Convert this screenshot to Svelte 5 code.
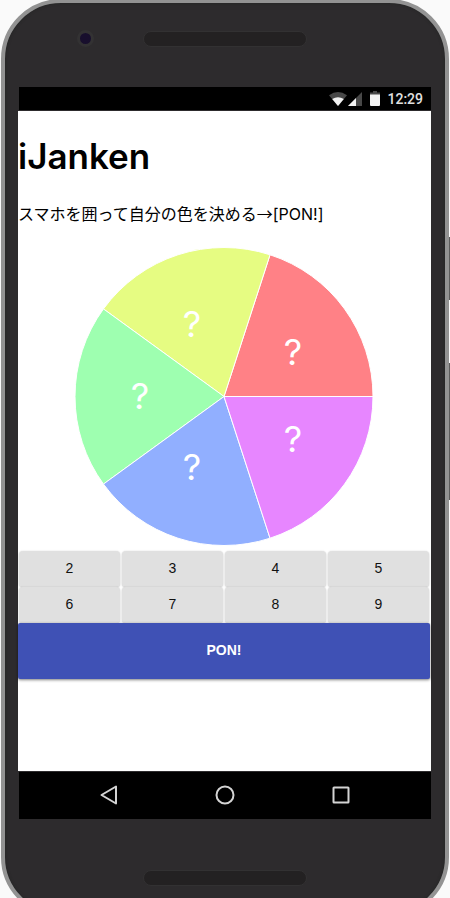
<script>
  const radius = 149;
  const centerX = 150;
  const centerY = 150.5;
  const slices = [
    { color: '#ff8186', x: 219, y: 119 },
    { color: '#e6fc82', x: 118, y: 91 },
    { color: '#9effb0', x: 66, y: 163 },
    { color: '#91afff', x: 118, y: 234 },
    { color: '#e786ff', x: 219, y: 206 }
  ];
  const numbers = [2, 3, 4, 5, 6, 7, 8, 9];

  function point(step) {
    const angle = (-step * 2 * Math.PI) / slices.length;
    return `${centerX + radius * Math.cos(angle)} ${centerY + radius * Math.sin(angle)}`;
  }

  function slicePath(i) {
    return `M${centerX} ${centerY}L${point(i)}A${radius} ${radius} 0 0 0 ${point(i + 1)}Z`;
  }
</script>

<div class="stage">
  <div class="phone">
    <span class="key power"></span>
    <span class="key volume"></span>

    <div class="bezel top">
      <span class="camera"></span>
      <span class="speaker"></span>
    </div>

    <div class="status">
      <svg class="wifi" width="18" height="14" viewBox="0 0 18 14" aria-hidden="true">
        <path d="M0 3.2Q9-3.2 18 3.2L9 14Z" fill="#484848" />
        <path d="M3.2 7Q9 3.6 14.8 7L9 14Z" fill="#f2f2f2" />
      </svg>
      <svg class="signal" width="14" height="14" viewBox="0 0 14 14" aria-hidden="true">
        <path d="M14 0V14H0Z" fill="#484848" />
        <path d="M8 6V14H0Z" fill="#f2f2f2" />
      </svg>
      <svg class="battery" width="10" height="15" viewBox="0 0 10 15" aria-hidden="true">
        <path d="M3 0H7V1.5H10V4H0V1.5H3Z" fill="#484848" />
        <path d="M0 3.5H10V14Q10 15 9 15H1Q0 15 0 14Z" fill="#f2f2f2" />
      </svg>
      <span class="time">12:29</span>
    </div>

    <main>
      <h1>iJanken</h1>
      <p>スマホを囲って自分の色を決める→<span class="latin">[PON!]</span></p>

      <svg class="wheel" width="300" height="300" viewBox="0 0 300 300">
        {#each slices as slice, i}
          <path d={slicePath(i)} fill={slice.color} stroke="#fff" />
        {/each}
        {#each slices as slice}
          <text x={slice.x} y={slice.y} text-anchor="middle">?</text>
        {/each}
      </svg>

      <div class="numbers">
        {#each numbers as n}
          <button type="button">{n}</button>
        {/each}
      </div>
      <button type="button" class="pon">PON!</button>
    </main>

    <nav>
      <button type="button" aria-label="Back">
        <svg width="20" height="20" viewBox="0 0 20 20"><path d="M17 1.5V18.5L2.5 10Z" /></svg>
      </button>
      <button type="button" aria-label="Home">
        <svg width="20" height="20" viewBox="0 0 20 20"><circle cx="10" cy="10" r="8.5" /></svg>
      </button>
      <button type="button" aria-label="Recent apps">
        <svg width="20" height="20" viewBox="0 0 20 20"><rect x="2.5" y="2.5" width="15" height="15" rx="0.5" /></svg>
      </button>
    </nav>

    <div class="bezel bottom">
      <span class="speaker"></span>
    </div>
  </div>
</div>

<style>
  :global(body) {
    margin: 0;
    background: #fafafa;
  }

  .stage {
    height: 100vh;
    overflow: hidden;
  }

  .phone {
    position: relative;
    box-sizing: border-box;
    display: flex;
    flex-direction: column;
    height: calc(100vh + 20px);
    margin: -1px 1px 0;
    padding: 0 14px 0 13px;
    border: 4px solid #939393;
    border-radius: 60px;
    background: #2d2b2d;
    box-shadow: inset 0 0 3px #222523;
    font-family: 'Liberation Sans', Arial, sans-serif;
  }

  .key {
    position: absolute;
    right: -5px;
    width: 1px;
    background: #5c5c5c;
  }

  .power {
    top: 234px;
    height: 63px;
  }

  .volume {
    top: 360px;
    height: 137px;
  }

  .bezel {
    display: flex;
    justify-content: center;
    flex: none;
  }

  .top {
    position: relative;
    height: 84px;
  }

  .bottom {
    height: 94px;
  }

  .speaker {
    box-sizing: border-box;
    width: 164px;
    height: 16px;
    margin-top: 28px;
    border: 1px solid #323132;
    border-radius: 8px;
    background: #232122;
  }

  .bottom .speaker {
    margin-top: 51px;
  }

  .camera {
    position: absolute;
    left: 59px;
    top: 27px;
    width: 11px;
    height: 11px;
    border: 3px solid #333233;
    border-radius: 50%;
    background: #180f2d;
  }

  .status {
    display: flex;
    align-items: center;
    justify-content: flex-end;
    flex: none;
    height: 23px;
    margin-left: 1px;
    padding-right: 8px;
    border-bottom: 1px solid #2d2b2d;
    background: #000;
  }

  .wifi {
    margin-right: 1px;
  }

  .signal {
    margin-right: 8px;
  }

  .battery {
    margin-right: 7px;
  }

  .time {
    color: #e0e0e0;
    font: 500 14px/24px Roboto, sans-serif;
  }

  main {
    flex: 1;
    padding: 20px 1px 0 0;
    background: #fff;
    color: #000;
  }

  h1 {
    margin: 0;
    font: 600 35px/50px Inter, sans-serif;
  }

  p {
    margin: 20px 0;
    font: 16px/24px 'Noto Sans CJK JP', sans-serif;
    white-space: nowrap;
  }

  .latin {
    font-family: Inter, sans-serif;
  }

  .wheel {
    display: block;
    margin: 0 auto;
  }

  .wheel text {
    fill: #fff;
    font: 400 36px Inter, sans-serif;
  }

  .numbers {
    display: grid;
    grid-template-columns: repeat(4, 1fr);
    margin-top: 5px;
  }

  button {
    padding: 0;
    border: 0;
    cursor: pointer;
  }

  .numbers button {
    height: 36px;
    margin: 0 1px;
    padding-bottom: 2px;
    border-radius: 4px;
    background: #e0e0e0;
    box-shadow: 0 0 2px rgba(0, 0, 0, 0.12), 0 1px 2px rgba(0, 0, 0, 0.12);
    color: #111;
    font: 14px/34px 'Liberation Sans', Arial, sans-serif;
  }

  .pon {
    position: relative;
    display: block;
    width: 100%;
    height: 56px;
    padding-bottom: 2px;
    border-radius: 2px;
    background: #3f51b5;
    box-shadow: 0 1px 3px rgba(0, 0, 0, 0.5);
    color: #fff;
    font: bold 14px/54px 'Liberation Sans', Arial, sans-serif;
  }

  nav {
    display: flex;
    align-items: center;
    justify-content: space-between;
    flex: none;
    box-sizing: border-box;
    height: 48px;
    margin-left: 1px;
    padding: 0 80px 1px;
    border-top: 1px solid #2d2b2d;
    background: #000;
  }

  nav button {
    display: grid;
    place-items: center;
    width: 20px;
    height: 20px;
    background: none;
  }

  nav svg {
    fill: none;
    stroke: #d4d4d4;
    stroke-width: 2;
    stroke-linejoin: round;
  }
</style>
